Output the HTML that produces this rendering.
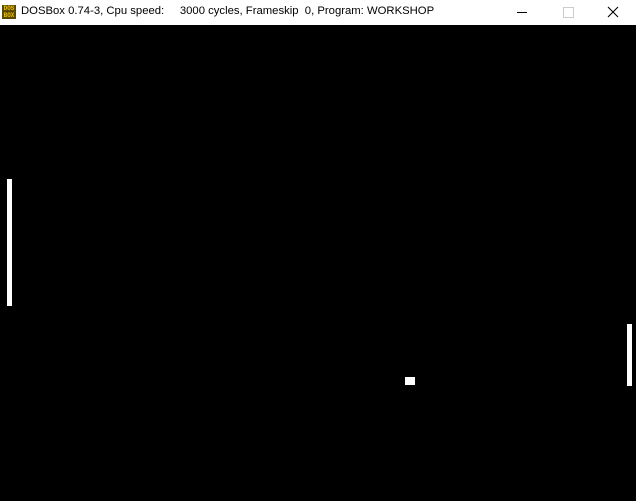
<!DOCTYPE html>
<html><head><style>
body{margin:0;width:636px;height:501px;background:#000;position:relative;overflow:hidden;font-family:"Segoe UI","Liberation Sans",sans-serif}
.t{position:absolute;left:0;top:0;width:636px;height:25px;background:#fff}
.tx{position:absolute;left:21px;top:5px;font-size:11.3px;color:#000;white-space:pre}
.ic{position:absolute;left:2px;top:5px;width:14px;height:14px;background:#5a4a00;color:#f0c000;font:bold 6px/7px "Liberation Mono",monospace;text-align:center}
.w{position:absolute;background:#fff}
</style></head><body>
<div class="t">
<div class="ic">DOS<br>BOX</div>
<div class="tx">DOSBox 0.74-3, Cpu speed:     3000 cycles, Frameskip  0, Program: WORKSHOP</div>
<div style="position:absolute;left:517px;top:12px;width:10px;height:1px;background:#000"></div>
<div style="position:absolute;left:563px;top:7px;width:9px;height:9px;border:1px solid #ccc"></div>
<svg style="position:absolute;left:607px;top:6px" width="12" height="12"><path d="M1 1L11 11M11 1L1 11" stroke="#000" stroke-width="1.1"/></svg>
</div>
<div class="w" style="left:7px;top:179px;width:5px;height:127px"></div>
<div class="w" style="left:627px;top:324px;width:5px;height:62px"></div>
<div class="w" style="left:405px;top:377px;width:10px;height:8px"></div>
</body></html>
